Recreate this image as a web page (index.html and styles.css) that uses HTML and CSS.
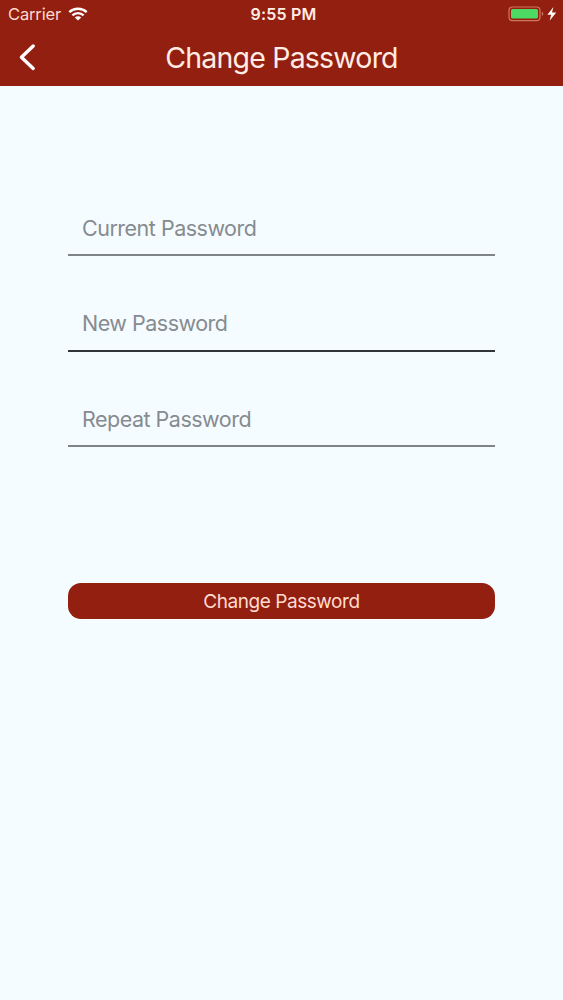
FILE: index.html
```html
<!DOCTYPE html>
<html lang="en">
<head>
    <meta charset="UTF-8">
    <meta name="viewport" content="width=device-width, initial-scale=1.0">
    <title>Change Password</title>
    <link rel="stylesheet" href="styles.css">
</head>
<body>
    <header class="header">
        <div class="status-bar">
            <div class="status-left">
                <span class="carrier">Carrier</span>
                <svg class="wifi" width="20" height="14" viewBox="0 0 20 14">
                    <path d="M1.3 5.2C6.2 .6 13.8 .6 18.7 5.2M4.4 8.4c3.1-3 8.1-3 11.2 0" fill="none" stroke="#fff" stroke-width="2.4"/>
                    <path d="M10 13.6L6.8 10.5c1.8-1.7 4.6-1.7 6.4 0z" fill="#fff"/>
                </svg>
            </div>
            <span class="time">9:55 PM</span>
            <div class="status-right">
                <svg width="50" height="16" viewBox="0 0 50 16">
                    <rect x="1" y="1" width="31" height="13.6" rx="3.4" fill="none" stroke="#cf7660" stroke-width="1.2"/>
                    <rect x="3" y="3" width="27" height="9.6" rx="1.6" fill="#4cd964"/>
                    <path d="M33.8 5.6c2 .8 2 3.6 0 4.4z" fill="#cf7660"/>
                    <path d="M45.4 1L39.4 8.7h3.8l-1.6 6 6.6-8.3h-4.2z" fill="#fff"/>
                </svg>
            </div>
        </div>
        <div class="nav-bar">
            <button class="back" type="button" aria-label="Back">
                <svg width="18" height="28" viewBox="0 0 18 28">
                    <path d="M15.2 3L3.4 14.2 15.2 25.4" fill="none" stroke="#fff" stroke-width="3.4" stroke-linecap="round" stroke-linejoin="round"/>
                </svg>
            </button>
            <h1 class="title">Change Password</h1>
        </div>
    </header>

    <form class="form">
        <input class="field" type="password" placeholder="Current Password">
        <input class="field field-dark" type="password" placeholder="New Password">
        <input class="field" type="password" placeholder="Repeat Password">
        <button class="submit" type="button">Change Password</button>
    </form>
</body>
</html>
```
FILE: styles.css
```css
* {
    box-sizing: border-box;
}

body {
    margin: 0;
    min-height: 100vh;
    background-color: #f5fcff;
    font-family: Inter, "Liberation Sans", sans-serif;
}

/* Header */
.header {
    height: 86px;
    background-color: #921f0f;
    color: #ffece4;
}

.status-bar {
    display: grid;
    grid-template-columns: 1fr auto 1fr;
    align-items: center;
    height: 28px;
    padding: 0 5px 0 8px;
}

.status-left {
    display: flex;
    align-items: center;
    gap: 7px;
}

.carrier {
    font-size: 16.5px;
    letter-spacing: -0.15px;
    color: #ffd9cd;
}

.time {
    padding-left: 1px;
    font-size: 16px;
    font-weight: 600;
    letter-spacing: 0.2px;
}

.status-right {
    display: flex;
    justify-content: flex-end;
}

.nav-bar {
    display: grid;
    grid-template-columns: 60px 1fr 60px;
    align-items: center;
    height: 58px;
}

.back {
    display: flex;
    padding: 0 0 0 18px;
    border: none;
    background: none;
    cursor: pointer;
}

.title {
    margin: 0;
    font-size: 28.5px;
    font-weight: 400;
    letter-spacing: -0.8px;
    text-align: center;
}

/* Form */
.form {
    display: flex;
    flex-direction: column;
    padding: 115px 68px 0;
}

.field {
    height: 55px;
    margin-bottom: 40.5px;
    padding: 0 14px;
    border: none;
    border-bottom: 2px solid #7f8487;
    border-radius: 0;
    background: none;
    font-family: inherit;
    font-size: 21.5px;
    letter-spacing: -0.5px;
    color: #2c3236;
    outline: none;
}

.field-dark {
    border-bottom-color: #2f3539;
}

.field::placeholder {
    color: #868b90;
    opacity: 1;
}

.submit {
    height: 36px;
    margin-top: 95.5px;
    border: none;
    border-radius: 13px;
    background-color: #921f0f;
    color: #ffdccf;
    font-family: inherit;
    font-size: 19px;
    letter-spacing: -0.45px;
    cursor: pointer;
}
```
